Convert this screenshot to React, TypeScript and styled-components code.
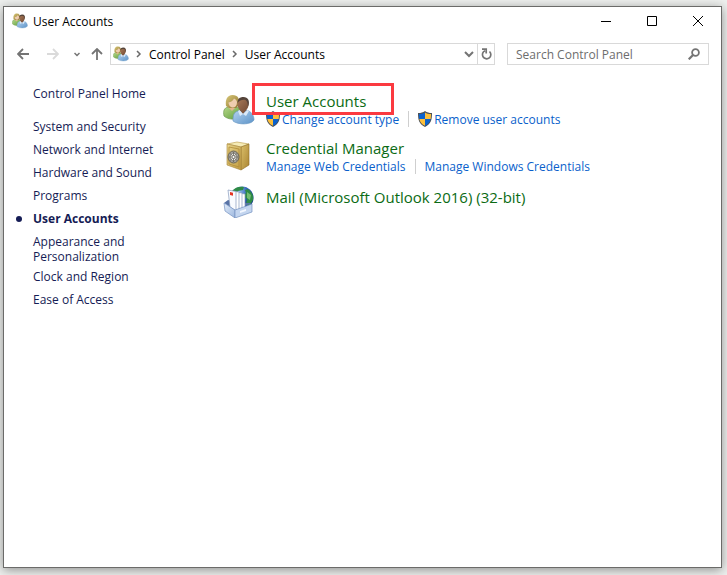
import React from "react";
import styled, { createGlobalStyle, css } from "styled-components";

const GlobalStyle = createGlobalStyle`
  *, *::before, *::after { box-sizing: border-box; }
  body {
    margin: 0;
    background: #eef0ee;
    font-family: "Open Sans", "Noto Sans", sans-serif;
    font-size: 12px;
    line-height: 15px;
    color: #000;
  }
  button, input { font: inherit; color: inherit; }
  a { color: inherit; text-decoration: none; }
  ul { list-style: none; margin: 0; padding: 0; }
  svg { display: block; flex: none; }
`;

const Page = styled.div`
  min-height: 100vh;
  display: flex;
  padding: 6px 5px 7px 3px;
`;

const Window = styled.div`
  flex: 1;
  min-width: 0;
  display: flex;
  flex-direction: column;
  background: #fff;
  border: 1px solid #6b6b69;
  box-shadow: 0 2px 10px rgba(0, 0, 0, 0.4);
`;

const TitleBar = styled.header`
  display: flex;
  align-items: center;
  height: 28px;
  padding-left: 8px;
  gap: 5px;
`;

const WindowTitle = styled.h1`
  flex: 1;
  margin: 0;
  font-size: 12px;
  font-weight: 400;
`;

const CaptionButtons = styled.div`
  display: flex;
`;

const PlainButton = styled.button`
  display: flex;
  align-items: center;
  justify-content: center;
  border: 0;
  padding: 0;
  background: none;
`;

const CaptionButton = styled(PlainButton)`
  width: 46px;
  height: 28px;
`;

const NavRow = styled.nav`
  display: flex;
  align-items: center;
  margin-top: 8px;
  padding: 0 12px 0 10px;
`;

const NavButton = styled(PlainButton)<{ $width: number }>`
  width: ${(p) => p.$width}px;
  height: 22px;
`;

const UpButton = styled(NavButton)`
  padding-left: 4px;
`;

const fieldBox = css`
  display: flex;
  align-items: center;
  height: 22px;
  border: 1px solid #d9d9d9;
`;

const AddressBar = styled.div`
  ${fieldBox}
  flex: 1;
  min-width: 0;
  padding-left: 2px;
`;

const Crumb = styled.a`
  white-space: nowrap;
`;

const CrumbArrow = styled.span`
  display: flex;
  justify-content: center;
  width: 20px;
`;

const HistoryButton = styled(NavButton)`
  margin-left: auto;
`;

const RefreshButton = styled(NavButton)`
  height: 20px;
  border-left: 1px solid #d9d9d9;
`;

const SearchBox = styled.label`
  ${fieldBox}
  width: 202px;
  margin-left: 12px;
  padding: 0 8px;
`;

const SearchInput = styled.input`
  flex: 1;
  min-width: 0;
  border: 0;
  outline: 0;
  padding: 0;
  background: none;
  &::placeholder { color: #6d6d6d; opacity: 1; }
`;

const Content = styled.div`
  flex: 1;
  display: flex;
  padding-top: 21px;
`;

const Sidebar = styled.aside`
  width: 219px;
  flex: none;
  color: #151c55;
`;

const SideItem = styled.li<{ $current?: boolean }>`
  display: flex;
  min-height: 23px;
  padding-bottom: 5px;
  font-weight: ${(p) => (p.$current ? 700 : 400)};
`;

const Marker = styled.span`
  display: flex;
  align-items: center;
  width: 29px;
  height: 15px;
  padding-left: 12px;
  flex: none;
`;

const Dot = styled.span`
  width: 6px;
  height: 6px;
  border-radius: 50%;
  background: #151c55;
`;

const SideLink = styled.a`
  max-width: 140px;
`;

const HomeLink = styled.a`
  display: block;
  padding-left: 29px;
  margin-bottom: 18px;
`;

const Categories = styled.main`
  flex: 1;
  min-width: 0;
  display: flex;
  flex-direction: column;
  gap: 11px;
  padding-top: 5px;
`;

const Category = styled.section`
  position: relative;
  display: flex;
  gap: 11px;
`;

const CategoryIcon = styled.div<{ $alone?: boolean }>`
  padding-top: ${(p) => (p.$alone ? 1 : 3)}px;
`;

const CategoryTitle = styled.h2<{ $alone?: boolean }>`
  margin: 0;
  font-size: 15px;
  font-weight: 400;
  line-height: ${(p) => (p.$alone ? 24 : 20)}px;
  color: #0b6b14;
`;

const TaskList = styled.ul`
  display: flex;
  align-items: center;
  height: 16px;
  color: #0a5fcb;
`;

const Task = styled.li`
  display: flex;
  align-items: center;
  & + & {
    margin-left: 9px;
    padding-left: 9px;
    border-left: 1px solid #cfcfcf;
  }
`;

const TaskLink = styled.a`
  display: flex;
  align-items: center;
  gap: 2px;
  white-space: nowrap;
`;

const Highlight = styled.div`
  position: absolute;
  left: 29px;
  top: -8px;
  width: 142px;
  height: 32px;
  border: 3px solid #fb3a40;
  pointer-events: none;
`;

const PeopleIcon = ({ size, id }: { size: number; id: string }) => (
  <svg width={size} height={size} viewBox="0 0 32 32" aria-hidden="true">
    <defs>
      <linearGradient id={`${id}-green`} x1="0" y1="0" x2="1" y2="1">
        <stop offset="0" stopColor="#b9d98c" />
        <stop offset="1" stopColor="#5a9a38" />
      </linearGradient>
      <linearGradient id={`${id}-blue`} x1="0" y1="0" x2="1" y2="1">
        <stop offset="0" stopColor="#b5d3ef" />
        <stop offset="1" stopColor="#5c93c8" />
      </linearGradient>
      <linearGradient id={`${id}-hair`} x1="0" y1="0" x2="1" y2="1">
        <stop offset="0" stopColor="#d8c878" />
        <stop offset="1" stopColor="#8f7430" />
      </linearGradient>
      <linearGradient id={`${id}-face`} x1="0" y1="0" x2="1" y2="1">
        <stop offset="0" stopColor="#a97a58" />
        <stop offset="1" stopColor="#754c35" />
      </linearGradient>
    </defs>
    <path d="M1 22c-1-5 0-8 4-9l4-1 5 1c3 1 5 4 5 8v3c-5 2-14 2-18-2z" fill={`url(#${id}-green)`} stroke="#6d9a50" strokeWidth=".7" />
    <path d="M5 13l4 4 4-4-3-2z" fill="#e3b48c" />
    <path d="M3 12C2 6 4 1 9.500 1 15 1 17 5 16 11l-3 3H6z" fill={`url(#${id}-hair)`} />
    <path d="M5.500 8.500C8 8 10 7 11 4.500c2 1 3 2 3 4 0 3-2 5-4 5s-4.500-2-4.500-5z" fill="#efcdb0" />
    <path d="M10 27c0-6 1-9 5-10l4-1h4c5 1 8 5 8 10-3 5-16 5-21 1z" fill={`url(#${id}-blue)`} stroke="#6f9cc6" strokeWidth=".7" />
    <path d="M16.500 16l3.500 4 3.500-4-1-2h-5z" fill="#83583f" />
    <path d="M15 17l1.500-1L20 20l-3 2zM24.500 16L20 20l3 2 3-5z" fill="#dbe9f7" />
    <path d="M14.500 10c0-4 2-6 5.500-6s6 3 5.500 7c0 3-2.500 6-5.500 6s-5.500-3-5.500-7z" fill={`url(#${id}-face)`} />
    <path d="M14.500 9c0-4 2-6 6-6 4.500 0 6.500 4 5 8.500l-.7.5c0-3-.8-5-2.300-6-2.500-.5-6 0-8 3z" fill="#55443a" />
  </svg>
);

const SafeIcon = () => (
  <svg width="32" height="32" viewBox="0 0 32 32" aria-hidden="true">
    <defs>
      <linearGradient id="safe-front" x1="0" y1="0" x2="1" y2="1">
        <stop offset="0" stopColor="#e9d68c" />
        <stop offset="1" stopColor="#bf9a40" />
      </linearGradient>
      <linearGradient id="safe-side" x1="0" y1="0" x2="1" y2="1">
        <stop offset="0" stopColor="#dcc06a" />
        <stop offset="1" stopColor="#a98432" />
      </linearGradient>
    </defs>
    <path d="M4 3l10-2 12 2-8 3z" fill="#f5ebb6" stroke="#b99743" strokeWidth=".6" />
    <path d="M18 6l8-3v21l-8 5z" fill="url(#safe-side)" stroke="#8d6c25" strokeWidth=".6" />
    <path d="M4 3l14 3v23L4 24z" fill="url(#safe-front)" stroke="#a5833a" strokeWidth=".6" />
    <path d="M6 6l10 2v18L6 23z" fill="none" stroke="#b18c37" strokeWidth=".8" />
    <ellipse cx="10.500" cy="16" rx="5.500" ry="6" fill="#a2a09a" stroke="#6c6653" />
    <ellipse cx="10.500" cy="16" rx="3.400" ry="3.900" fill="#eeeeea" stroke="#7c786e" strokeWidth=".8" />
    <path d="M10.500 11v10M6 16h9M7.500 12.500l6 7M13.500 12.500l-6 7" stroke="#67645b" strokeWidth=".8" />
    <circle cx="10.500" cy="16" r="1.500" fill="#f7f7f4" stroke="#55524a" strokeWidth=".6" />
  </svg>
);

const MailIcon = () => (
  <svg width="32" height="32" viewBox="0 0 32 32" aria-hidden="true">
    <defs>
      <radialGradient id="mail-globe" cx=".35" cy=".2" r=".85">
        <stop offset="0" stopColor="#9dc4f0" />
        <stop offset=".45" stopColor="#2f62b8" />
        <stop offset="1" stopColor="#0b2b86" />
      </radialGradient>
      <linearGradient id="mail-tray" x1="0" y1="0" x2="1" y2="1">
        <stop offset="0" stopColor="#e4eefa" />
        <stop offset="1" stopColor="#9bb6de" />
      </linearGradient>
    </defs>
    <circle cx="19" cy="12" r="11.500" fill="url(#mail-globe)" />
    <path d="M9 5c3-4 8-5 12-4l-1 3-5 1-2 3zM22 4l3-1c4 3 6 7 5 11l-4 7-3-3 1-5-4-3 3-3z" fill="#2f8b46" />
    <path d="M24 6l4 3-1 5-3-2z" fill="#74bd72" />
    <path d="M1 17l4-3 18 3h6l-17 7z" fill="#5873a6" />
    <path d="M15 7l7 1v15l-7-2z" fill="#fff" stroke="#8599bb" strokeWidth=".7" />
    <path d="M12 6l7 1v17l-7-2z" fill="#fff" stroke="#8599bb" strokeWidth=".7" />
    <path d="M9 5l7 1v19l-7-3z" fill="#fff" stroke="#8599bb" strokeWidth=".7" />
    <path d="M5 4l8 1.500V25l-6-4z" fill="#f9fbff" stroke="#8599bb" strokeWidth=".7" />
    <path d="M7 6l3 .7v3L7 9z" fill="#e53524" />
    <path d="M1 17l11 7v8L2 25z" fill="url(#mail-tray)" stroke="#7592c2" strokeWidth=".7" />
    <path d="M12 24l17-6v8l-17 6z" fill="#c3d5ef" stroke="#7592c2" strokeWidth=".7" />
    <path d="M17 25l6-2v2l-6 2z" fill="#f2f7ff" />
  </svg>
);

const ShieldIcon = () => (
  <svg width="14" height="16" viewBox="0 0 14 16" aria-hidden="true">
    <path d="M7 0c2 1.500 4 2 7 2 0 7-1 11-7 14C1 13 0 9 0 2c3 0 5-.5 7-2z" fill="#4b5158" />
    <path d="M7 1.500V8H1.300C1 6 1 4.500 1 3c2.500 0 4.300-.5 6-1.500z" fill="#0b62cd" />
    <path d="M7 1.500V8h5.700C13 6 13 4.500 13 3c-2.500 0-4.300-.5-6-1.500z" fill="#fdbf3a" />
    <path d="M1.300 8H7v6.800C3.500 13 1.800 11 1.300 8z" fill="#fdbf3a" />
    <path d="M12.700 8H7v6.800c3.500-1.800 5.200-3.800 5.700-6.800z" fill="#0b62cd" />
  </svg>
);

const Arrow = ({ color, d }: { color: string; d: string }) => (
  <svg width="12" height="12" viewBox="0 0 12 12" fill="none" stroke={color} strokeWidth="1.800" aria-hidden="true">
    <path d={d} />
  </svg>
);

const Chevron = () => (
  <svg width="6" height="8" viewBox="0 0 6 8" fill="none" stroke="#6a6a6a" strokeWidth="1.500" aria-hidden="true">
    <path d="M1 1l3 3-3 3" />
  </svg>
);

const sideLinks = [
  "System and Security",
  "Network and Internet",
  "Hardware and Sound",
  "Programs",
  "User Accounts",
  "Appearance and Personalization",
  "Clock and Region",
  "Ease of Access",
];

const categories = [
  {
    title: "User Accounts",
    icon: <PeopleIcon size={32} id="category" />,
    tasks: ["Change account type", "Remove user accounts"],
    shielded: true,
    highlighted: true,
  },
  {
    title: "Credential Manager",
    icon: <SafeIcon />,
    tasks: ["Manage Web Credentials", "Manage Windows Credentials"],
  },
  { title: "Mail (Microsoft Outlook 2016) (32-bit)", icon: <MailIcon />, tasks: [] },
];

export default function App() {
  return (
    <>
      <GlobalStyle />
      <Page>
        <Window>
          <TitleBar>
            <PeopleIcon size={16} id="title" />
            <WindowTitle>User Accounts</WindowTitle>
            <CaptionButtons>
              <CaptionButton aria-label="Minimize">
                <svg width="10" height="10" viewBox="0 0 10 10"><path d="M0 5.500h10" stroke="#000" /></svg>
              </CaptionButton>
              <CaptionButton aria-label="Maximize">
                <svg width="10" height="10" viewBox="0 0 10 10"><path d="M.5.5h9v9h-9z" fill="none" stroke="#000" /></svg>
              </CaptionButton>
              <CaptionButton aria-label="Close">
                <svg width="10" height="10" viewBox="0 0 10 10"><path d="M0 0l10 10M10 0L0 10" stroke="#000" /></svg>
              </CaptionButton>
            </CaptionButtons>
          </TitleBar>

          <NavRow aria-label="Location">
            <NavButton $width={18} aria-label="Back">
              <Arrow color="#747474" d="M12 6H1M6 1L1 6l5 5" />
            </NavButton>
            <NavButton $width={42} aria-label="Forward">
              <Arrow color="#dadada" d="M0 6h11M6 1l5 5-5 5" />
            </NavButton>
            <NavButton $width={6} aria-label="Recent locations">
              <svg width="6" height="5" viewBox="0 0 6 5" fill="none" stroke="#747474" strokeWidth="1.500"><path d="M.5 1L3 3.500 5.500 1" /></svg>
            </NavButton>
            <UpButton $width={30} aria-label="Up">
              <Arrow color="#747474" d="M6 12V1M1 6l5-5 5 5" />
            </UpButton>
            <AddressBar>
              <PeopleIcon size={16} id="address" />
              <CrumbArrow><Chevron /></CrumbArrow>
              <Crumb href="#control-panel">Control Panel</Crumb>
              <CrumbArrow><Chevron /></CrumbArrow>
              <Crumb href="#user-accounts">User Accounts</Crumb>
              <HistoryButton $width={16} aria-label="Previous locations">
                <svg width="10" height="7" viewBox="0 0 10 7" fill="none" stroke="#747474" strokeWidth="2"><path d="M1 1l4 4 4-4" /></svg>
              </HistoryButton>
              <RefreshButton $width={17} aria-label="Refresh">
                <svg width="11" height="12" viewBox="0 0 11 12" fill="none" stroke="#747474" strokeWidth="1.700">
                  <path d="M8.500 3.500A4.200 4.200 0 1 1 4 2.700M1 1.200h4.200v4.300" />
                </svg>
              </RefreshButton>
            </AddressBar>
            <SearchBox>
              <SearchInput type="text" aria-label="Search Control Panel" placeholder="Search Control Panel" />
              <svg width="12" height="12" viewBox="0 0 12 12" fill="none" stroke="#747474" aria-hidden="true">
                <circle cx="7.500" cy="4.500" r="3.400" strokeWidth="1.800" />
                <path d="M5 7L.7 11.300" strokeWidth="2.200" />
              </svg>
            </SearchBox>
          </NavRow>

          <Content>
            <Sidebar>
              <HomeLink href="#home">Control Panel Home</HomeLink>
              <ul>
                {sideLinks.map((label) => {
                  const current = label === "User Accounts";
                  return (
                    <SideItem key={label} $current={current}>
                      <Marker>{current && <Dot />}</Marker>
                      <SideLink href="#category" aria-current={current ? "page" : undefined}>{label}</SideLink>
                    </SideItem>
                  );
                })}
              </ul>
            </Sidebar>

            <Categories>
              {categories.map((c) => {
                const alone = c.tasks.length === 0;
                return (
                  <Category key={c.title}>
                    <CategoryIcon $alone={alone}>{c.icon}</CategoryIcon>
                    <div>
                      <CategoryTitle $alone={alone}>
                        <a href="#open">{c.title}</a>
                      </CategoryTitle>
                      {!alone && (
                        <TaskList>
                          {c.tasks.map((task) => (
                            <Task key={task}>
                              <TaskLink href="#task">
                                {c.shielded && <ShieldIcon />}
                                {task}
                              </TaskLink>
                            </Task>
                          ))}
                        </TaskList>
                      )}
                    </div>
                    {c.highlighted && <Highlight />}
                  </Category>
                );
              })}
            </Categories>
          </Content>
        </Window>
      </Page>
    </>
  );
}
